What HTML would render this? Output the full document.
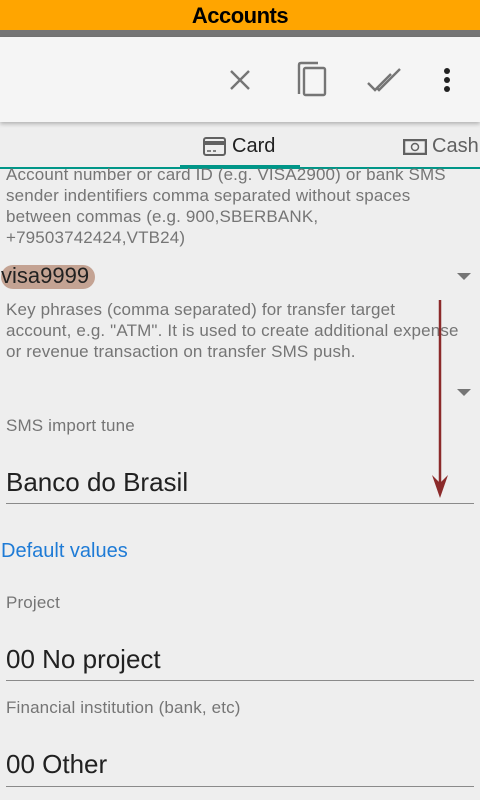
<!DOCTYPE html>
<html><head><style>
*{margin:0;padding:0;box-sizing:border-box}
body{width:480px;height:800px;overflow:hidden;background:#eeeeee;font-family:"Liberation Sans",sans-serif;position:relative}
.a{position:absolute;white-space:nowrap}
.h{color:#757575;font-size:17px;line-height:21px;letter-spacing:0.15px}
.v{color:#212121;font-size:26px}
.u{position:absolute;left:6px;width:468px;height:1px;background:#8a8a8a}
</style></head><body>
<div class="a" style="left:0;top:0;width:480px;height:30px;background:#ffa500;text-align:center;font-weight:bold;font-size:22px;line-height:32px;color:#000;letter-spacing:-0.5px">Accounts</div>
<div class="a" style="left:0;top:30px;width:480px;height:7px;background:#757575"></div>
<div class="a" style="left:0;top:37px;width:480px;height:85px;background:#f5f5f5;box-shadow:0 2px 4px rgba(0,0,0,0.25)"></div>
<svg class="a" style="left:0;top:37px" width="480" height="85">
<g stroke="#757575" stroke-width="2.4" fill="none">
<path d="M231 34 L249 52 M249 34 L231 52"/>
<path d="M299 57 V28 Q299 26 301 26 H318"/>
<rect x="304" y="31" width="21" height="27" rx="1.5"/>
<path d="M368 46 L375 53 L391 37"/>
<path d="M377 51 L379 53 L400 32"/>
</g>
<g fill="#212121"><circle cx="447" cy="34" r="3"/><circle cx="447" cy="43" r="3"/><circle cx="447" cy="52" r="3"/></g>
</svg>
<svg class="a" style="left:203px;top:137px" width="24" height="20"><rect x="1" y="1" width="21" height="17" rx="2" fill="none" stroke="#616161" stroke-width="2"/><rect x="1" y="4" width="21" height="4" fill="#616161"/><path d="M4 14 H8 M10 14 H13" stroke="#616161" stroke-width="1.5"/></svg>
<div class="a" style="left:232px;top:135px;font-size:20px;color:#212121">Card</div>
<svg class="a" style="left:403px;top:139px" width="24" height="16"><rect x="1" y="1" width="22" height="14" fill="none" stroke="#616161" stroke-width="2.5"/><circle cx="12" cy="8" r="3.5" fill="none" stroke="#616161" stroke-width="1.5"/></svg>
<div class="a" style="left:432px;top:135px;font-size:20px;color:#616161">Cash</div>
<div class="a" style="left:0;top:167px;width:480px;height:2px;background:#009688"></div>
<div class="a" style="left:180px;top:165px;width:120px;height:3px;background:#009688"></div>
<div class="a h" style="left:6px;top:164px;width:470px">Account number or card ID (e.g. VISA2900) or bank SMS<br>sender indentifiers comma separated without spaces<br>between commas (e.g. 900,SBERBANK,<br>+79503742424,VTB24)</div>
<div class="a" style="left:1px;top:265px;height:24px;width:94px;background:#c4a393;border-radius:12px"></div>
<div class="a" style="left:1px;top:263px;font-size:22px;color:#212121">visa9999</div>
<svg class="a" style="left:456px;top:272px" width="16" height="10"><path d="M1 1 H15 L8 8Z" fill="#757575"/></svg>
<div class="a h" style="left:6px;top:299px">Key phrases (comma separated) for transfer target<br>account, e.g. "ATM". It is used to create additional expense<br>or revenue transaction on transfer SMS push.</div>
<svg class="a" style="left:456px;top:388px" width="16" height="10"><path d="M1 1 H15 L8 8Z" fill="#757575"/></svg>
<div class="a h" style="left:6px;top:415px">SMS import tune</div>
<div class="a v" style="left:6px;top:467px">Banco do Brasil</div>
<div class="u" style="top:503px"></div>
<div class="a" style="left:1px;top:540px;font-size:20px;color:#1e7bd6">Default values</div>
<div class="a h" style="left:6px;top:592px">Project</div>
<div class="a v" style="left:6px;top:644px">00 No project</div>
<div class="u" style="top:680px"></div>
<div class="a h" style="left:6px;top:697px">Financial institution (bank, etc)</div>
<div class="a v" style="left:6px;top:749px">00 Other</div>
<div class="u" style="top:786px"></div>
<svg class="a" style="left:420px;top:295px" width="40" height="210"><path d="M20 5 V195" stroke="#8b2a2a" stroke-width="2.5"/><path d="M12 180 L20 203 L28 180 L20 188Z" fill="#8b2a2a"/></svg>
</body></html>
